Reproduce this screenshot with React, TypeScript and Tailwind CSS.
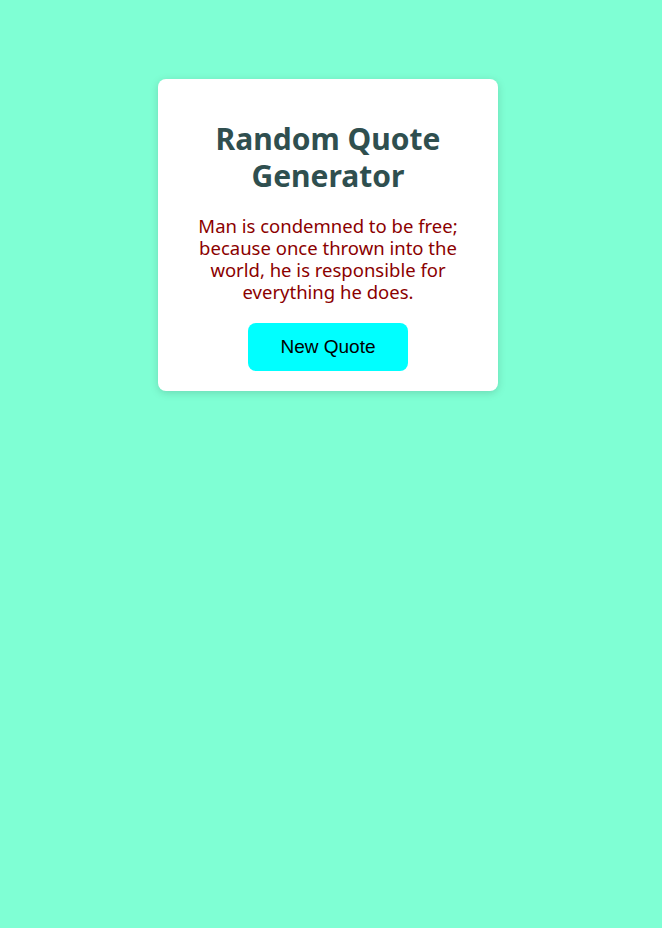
import React from "react";

export default function App() {
  return (
    <div className="min-h-[928px] w-full bg-[#7fffd4] pt-[79px] flex justify-center pr-[6px]">
      <div className="w-[340px] h-fit rounded-[8px] bg-white shadow-[0_2px_8px_rgba(0,0,0,0.15)] p-[20px] flex flex-col items-center text-center">
        <h1 className="mt-[21px] mb-[21px] text-[30px] leading-[37px] font-bold text-[#2f4f4f] font-['Noto_Sans',sans-serif]">
          Random Quote
          <br />
          Generator
        </h1>
        <p className="mb-[20px] text-[18.5px] leading-[22px] text-[#8b0000] font-['Noto_Sans',sans-serif]">
          Man is condemned to be free;
          <br />
          because once thrown into the
          <br />
          world, he is responsible for
          <br />
          everything he does.
        </p>
        <button className="w-[160px] h-[48px] rounded-[8px] bg-[#00ffff] text-[19px] text-black font-['Liberation_Sans',Arial,sans-serif]">
          New Quote
        </button>
      </div>
    </div>
  );
}
